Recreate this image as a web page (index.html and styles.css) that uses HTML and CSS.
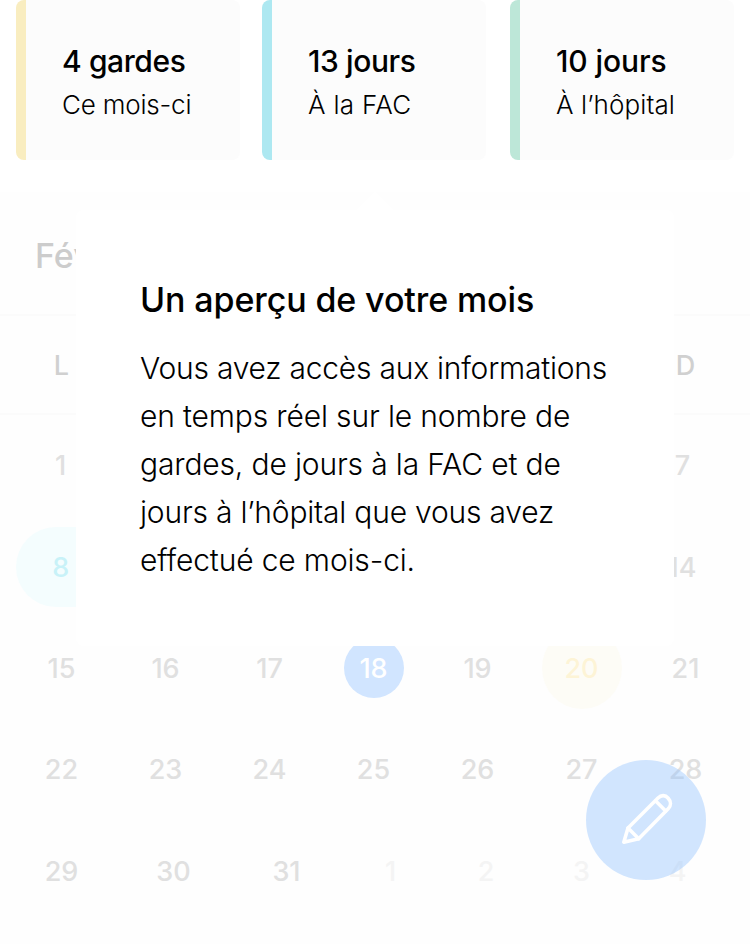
FILE: index.html
```html
<!DOCTYPE html>
<html lang="fr">
<head>
<meta charset="utf-8">
<title>Calendrier</title>
<link rel="stylesheet" href="styles.css">
</head>
<body>
<main class="screen">
  <section class="stats">
    <article class="stat stat-yellow"><h2>4 gardes</h2><p class="month">Ce mois-ci</p></article>
    <article class="stat stat-cyan"><h2>13 jours</h2><p class="fac">À la FAC</p></article>
    <article class="stat stat-green"><h2>10 jours</h2><p class="hospital">À l’hôpital</p></article>
  </section>
  <section class="calendar">
    <header class="month-bar">Fév</header>
    <div class="row weekdays"><span>L</span><span></span><span></span><span></span><span></span><span></span><span>D</span></div>
    <div class="row"><span class="one">1</span><span></span><span></span><span></span><span></span><span></span><span class="seven">7</span></div>
    <div class="row"><span class="range">8</span><span></span><span></span><span></span><span></span><span></span><span class="fourteen">14</span></div>
    <div class="row"><span>15</span><span>16</span><span>17</span><span><b class="today">18</b></span><span>19</span><span><b class="duty">20</b></span><span>21</span></div>
    <div class="row"><span>22</span><span>23</span><span>24</span><span>25</span><span>26</span><span>27</span><span>28</span></div>
    <div class="row last"><span>29</span><span>30</span><span>31</span><span class="next">1</span><span class="next">2</span><span class="next">3</span><span class="next">4</span></div>
  </section>
  <aside class="popover">
    <h1>Un aperçu de votre mois</h1>
    <p class="l1">Vous avez accès aux informations</p>
    <p class="l2">en temps réel sur le nombre de</p>
    <p class="l3">gardes, de jours à la FAC et de</p>
    <p class="l4">jours à l’hôpital que vous avez</p>
    <p class="l5">effectué ce mois-ci.</p>
  </aside>
  <button class="edit" aria-label="Modifier">
    <svg width="56" height="56" viewBox="0 0 56 56" fill="none" stroke="#fff" stroke-width="3.6" stroke-linejoin="round" stroke-linecap="round">
      <path d="M3.8 52.200 8 38 38 8C41.500 4.600 45.300 5 48.200 8.200 51.200 11.500 51.200 15.500 48.200 18.700L18.700 48.700Z"/>
      <path d="M8 38 18.700 48.700M35.700 11 45.700 21"/>
    </svg>
  </button>
</main>
</body>
</html>
```
FILE: styles.css
```css
* { box-sizing: border-box; margin: 0; padding: 0; }
body { background: #fefefe; font-family: Inter, "Liberation Sans", sans-serif; color: #000; }
.screen { position: relative; width: 750px; height: 944px; overflow: hidden; }
.stats { display: flex; height: 192px; padding-left: 16px; background: #fff; }
.stat { width: 224px; height: 160px; margin-right: 22px; padding: 40px 0 0 36px; background: #fcfcfc; border-left: 10px solid; border-radius: 8px; flex: none; white-space: nowrap; }
.stat-cyan { margin-right: 24px; }
.stat-green { margin-right: 0; }
.stat-yellow { border-color: #f9edc0; }
.stat-cyan { border-color: #ade8f1; }
.stat-green { border-color: #bde7d8; }
.stat h2 { font-size: 30px; line-height: 43px; font-weight: 500; letter-spacing: -.4px; }
.stat-green h2 { letter-spacing: -.1px; }
.stat p { font-size: 26px; line-height: 44px; font-weight: 300; }
.stat .month { letter-spacing: -.2px; }
.stat .fac { letter-spacing: .3px; }
.stat .hospital { letter-spacing: .1px; }
.calendar { height: 752px; background: #fefefe; }
.month-bar { height: 124px; padding-left: 35px; line-height: 128px; font-size: 34px; font-weight: 500; color: #ccc; border-bottom: 2px solid #fbfbfb; }
.row { display: grid; grid-template-columns: repeat(7, 104px); height: 101.400px; padding-left: 9.500px; align-items: center; text-align: center; font-size: 27px; font-weight: 500; color: #e0e0e0; }
.row > span { display: flex; justify-content: center; align-items: center; height: 80px; }
.weekdays { height: 99px; padding-top: 1px; color: #d0d0d0; border-bottom: 2px solid #fbfbfb; }
.row .one { padding-right: 2px; }
.row .seven { padding-right: 6px; }
.row .fourteen { padding-right: 7px; }
.range { margin-left: 6.500px; padding-right: 8px; border-radius: 40px 0 0 40px; background: #f4fdfe; color: #c8f2f8; }
.row b { display: flex; align-items: center; justify-content: center; font-weight: 500; border-radius: 50%; }
.today { width: 60px; height: 60px; background: #d1e5ff; color: #fff; }
.row .duty { width: 80px; height: 82px; flex: none; background: #fdfcf6; color: #fdf4d6; }
.last { grid-template-columns: 104px 120px 106px 102px 89px 102px 90px; }
.next { color: #f4f4f4; }
.popover { position: absolute; left: 76px; top: 210px; width: 598px; height: 436px; padding: 66px 0 0 64px; background: #fff; border-radius: 8px; white-space: nowrap; }
.popover::before { content: ""; position: absolute; left: 280px; top: -18px; border: 19px solid transparent; border-top: 0; border-bottom-color: #fff; }
.popover h1 { font-size: 34px; line-height: 48px; font-weight: 500; letter-spacing: -.12px; margin-bottom: 20px; }
.popover p { font-size: 30px; line-height: 48px; font-weight: 300; letter-spacing: -.15px; }
.popover .l1 { letter-spacing: -.23px; }
.popover .l4 { letter-spacing: -.2px; }
.edit { position: absolute; left: 586px; top: 760px; width: 120px; height: 120px; padding: 30px 0 0 34px; display: flex; align-items: flex-start; border: 0; border-radius: 50%; background: rgba(143, 193, 255, .4); }
```
